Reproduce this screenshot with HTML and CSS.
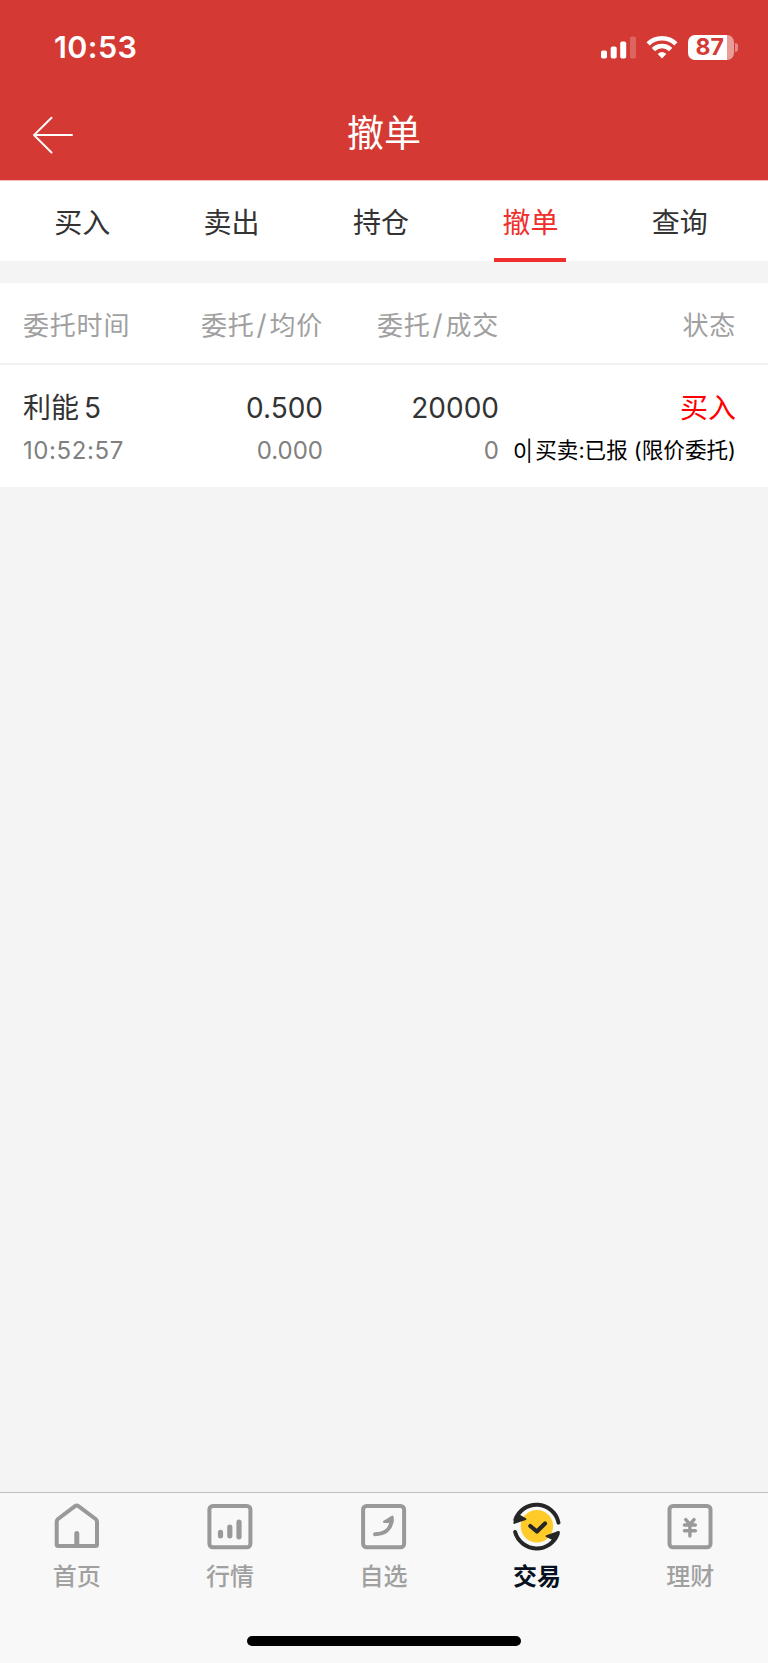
FILE: index.html
```html
<!DOCTYPE html>
<html lang="zh-CN">
<head>
  <meta charset="UTF-8">
  <meta name="viewport" content="width=device-width, initial-scale=1.0">
  <title>撤单</title>
  <link rel="stylesheet" href="styles.css">
</head>
<body>

  <header class="header">
    <div class="status-bar">
      <span class="clock">10:53</span>
      <div class="status-icons">
        <svg class="signal" width="36" height="26" viewBox="0 0 36 26" fill="#fff">
          <rect x="0" y="15.5" width="6" height="8" rx="1.8"/>
          <rect x="9.7" y="11.5" width="6" height="12" rx="1.8"/>
          <rect x="19.2" y="6.5" width="6" height="17" rx="1.8"/>
          <rect x="29" y="1.5" width="6" height="22" rx="1.8" opacity="0.22"/>
        </svg>
        <svg class="wifi" width="32" height="26" viewBox="0 0 32 26">
          <g fill="none" stroke="#fff" stroke-width="4.6">
            <path d="M2.1 8.9A20 20 0 0 1 29.9 8.9"/>
            <path d="M7.4 14.6A12.2 12.2 0 0 1 24.6 14.6"/>
          </g>
          <path d="M11.7 19Q16 15.2 20.3 19L16 23.6z" fill="#fff"/>
        </svg>
        <div class="battery"><span>87</span></div>
        <i class="battery-tip"></i>
      </div>
    </div>
    <div class="title-bar">
      <svg class="back" width="42" height="40" viewBox="0 0 42 40" fill="none" stroke="#fff" stroke-width="2" stroke-linecap="round" stroke-linejoin="round">
        <path d="M19.5 2.7L2 20.1L19.5 37.5M2 20.1H40"/>
      </svg>
      <h1>撤单</h1>
    </div>
  </header>

  <nav class="tabs">
    <a class="tab">买入</a>
    <a class="tab">卖出</a>
    <a class="tab">持仓</a>
    <a class="tab active">撤单</a>
    <a class="tab">查询</a>
  </nav>

  <main class="orders">
    <div class="row thead">
      <div>委托时间</div>
      <div>委托<i class="slash">/</i>均价</div>
      <div>委托<i class="slash">/</i>成交</div>
      <div>状态</div>
    </div>
    <div class="row order">
      <div><p class="main-text name">利能 5</p><p class="sub-text time">10:52:57</p></div>
      <div><p class="main-text">0.500</p><p class="sub-text">0.000</p></div>
      <div><p class="main-text">20000</p><p class="sub-text">0</p></div>
      <div><p class="main-text buy">买入</p><p class="sub-text state"><span class="count">0|</span>买卖:已报 (限价委托)</p></div>
    </div>
  </main>

  <footer class="footer">
    <nav class="menu">
      <a class="menu-item">
        <svg width="50" height="50" viewBox="0 0 50 50" fill="none" stroke="#999" stroke-width="4" stroke-linecap="round" stroke-linejoin="round">
          <path d="M23 5.2Q24.7 4 26.4 5.2L43.6 18Q45 19.2 45 20.5V43.5Q45 45 43.5 45H6.1Q4.7 45 4.7 43.5V20.5Q4.7 19.2 6 18z"/>
          <path d="M24.8 32.5V44" stroke-width="5"/>
        </svg>
        <span>首页</span>
      </a>
      <a class="menu-item">
        <svg width="50" height="50" viewBox="0 0 50 50" fill="none" stroke="#999" stroke-width="4" stroke-linecap="round">
          <rect x="4.4" y="4.9" width="41" height="41.4" rx="3.5"/>
          <path d="M15.5 31.3V34.8M24.8 26V34.8M34 21.2V35.8" stroke-width="5.2"/>
        </svg>
        <span>行情</span>
      </a>
      <a class="menu-item">
        <svg width="50" height="50" viewBox="0 0 50 50" fill="none" stroke="#999" stroke-width="4" stroke-linecap="round" stroke-linejoin="round">
          <rect x="4.1" y="4.9" width="41" height="41.4" rx="3.5"/>
          <path d="M16 33.2C26 33.2 32.5 28 32.7 18"/>
          <path d="M25.2 20.8L33.4 15.8V20.8z" stroke-width="2.4" fill="#999"/>
        </svg>
        <span>自选</span>
      </a>
      <a class="menu-item active">
        <svg width="50" height="50" viewBox="0 0 50 50" fill="none" stroke="#262626" stroke-width="4" stroke-linecap="round" stroke-linejoin="round">
          <circle cx="24.9" cy="25.3" r="16.2" fill="#ffcb29" stroke="none"/>
          <path d="M3.3 19A22.4 22.4 0 0 1 46.5 21.6"/>
          <path d="M45.8 32.5A22.4 22.4 0 0 1 3.1 31"/>
          <path d="M2.3 21.9L5.5 13.5L13.4 18z" stroke-width="2" fill="#262626"/>
          <path d="M46.7 31L34.6 35.2L43 39z" stroke-width="2" fill="#262626"/>
          <path d="M18.3 25L24.9 30.5L33 22.5" stroke-width="4.2"/>
        </svg>
        <span>交易</span>
      </a>
      <a class="menu-item">
        <svg width="50" height="50" viewBox="0 0 50 50" fill="none" stroke="#999" stroke-width="4" stroke-linecap="round" stroke-linejoin="round">
          <rect x="4.5" y="4.9" width="41" height="41.4" rx="3.5"/>
          <path d="M20.8 18.6L24.9 23.4L29 18.6M24.9 24V35M19.4 24H30.4M19.4 29.8H30.4" stroke-width="3.4"/>
        </svg>
        <span>理财</span>
      </a>
    </nav>
    <div class="home-indicator"></div>
  </footer>

</body>
</html>
```

FILE: styles.css
```css
* {
  box-sizing: border-box;
}

body {
  margin: 0;
  min-height: 1663px;
  display: flex;
  flex-direction: column;
  background-color: #f4f4f4;
  color: #333;
  font-family: Inter, "Noto Sans CJK SC", sans-serif;
}

p, h1 {
  margin: 0;
  font-weight: 400;
}

svg {
  display: block;
  flex-shrink: 0;
}

/* header */
.header {
  height: 181px;
  background-color: #d43a33;
  border-bottom: 1px solid #f3bdba;
  color: #fff;
}

.status-bar {
  display: flex;
  justify-content: space-between;
  height: 95px;
  padding: 0 30px 0 54px;
}

.clock {
  font-size: 30.5px;
  font-weight: 600;
  line-height: 93px;
  letter-spacing: 0.4px;
}

.status-icons {
  display: flex;
  align-items: flex-start;
  padding-top: 34.5px;
}

.signal {
  margin-right: 9px;
}

.wifi {
  margin-right: 9.5px;
}

.battery {
  width: 46px;
  height: 25px;
  border-radius: 7px;
  background: linear-gradient(to right, #fff 39.5px, #e99c98 39.5px);
  color: #d43a33;
  font-size: 23px;
  font-weight: 700;
  line-height: 25px;
  padding-left: 8px;
}

.battery-tip {
  width: 3px;
  height: 9px;
  margin: 8px 0 0 1.5px;
  border-radius: 0 4px 4px 0;
  background-color: #e48a86;
}

.title-bar {
  display: flex;
  align-items: center;
  height: 80px;
  padding: 0 32px;
}

.title-bar h1 {
  flex: 1;
  margin-right: 42px;
  text-align: center;
  font-size: 37px;
  line-height: 74px;
  padding-bottom: 2px;
}

/* tabs */
.tabs {
  display: flex;
  height: 80px;
  padding: 0 13.5px 0 7.5px;
  background-color: #fff;
  margin-bottom: 22px;
}

.tab {
  position: relative;
  flex: 1;
  text-align: center;
  font-size: 28px;
  line-height: 85px;
}

.tab.active {
  color: #ef2f2c;
}

.tab.active::after {
  content: "";
  position: absolute;
  left: 50%;
  bottom: -1px;
  width: 72px;
  height: 4px;
  margin-left: -36.5px;
  background-color: #ef2f2c;
}

/* orders */
.orders {
  background-color: #fff;
}

.row {
  display: grid;
  grid-template-columns: 124px 176px 176px 1fr;
  padding: 0 32px 0 23px;
  text-align: right;
  white-space: nowrap;
}

.row > div:first-child {
  text-align: left;
}

.thead {
  height: 82px;
  border-bottom: 2px solid #f2f2f2;
  color: #a0a0a0;
  font-size: 26px;
  line-height: 85px;
  letter-spacing: 0.8px;
}

.slash {
  margin: 0 2px;
  font-size: 28px;
  font-style: normal;
}

.order {
  height: 122px;
  padding-top: 22px;
}

.main-text {
  font-size: 28px;
  line-height: 43px;
}

.main-text.name {
  word-spacing: -3px;
}

.sub-text {
  font-size: 24px;
  line-height: 42px;
  color: #808080;
}

.sub-text.time {
  letter-spacing: 0.6px;
}

.main-text.buy {
  color: #f00;
}

.sub-text.state {
  color: #000;
  font-size: 21.6px;
  line-height: 40px;
}

.count {
  margin-right: 3px;
  font-size: 20.5px;
  letter-spacing: -0.5px;
}

/* bottom menu */
.footer {
  margin-top: auto;
  height: 171px;
  background-color: #f8f8f8;
  border-top: 1px solid #bfbfbf;
}

.menu {
  display: flex;
  height: 143px;
  padding-right: 1px;
}

.menu-item {
  flex: 1;
  display: flex;
  flex-direction: column;
  align-items: center;
  padding-top: 8px;
  color: #a0a0a0;
  font-size: 24px;
  font-weight: 500;
  line-height: 52px;
}

.menu-item.active {
  color: #061020;
  font-weight: 700;
}

.home-indicator {
  width: 274px;
  height: 10px;
  margin: 0 auto;
  border-radius: 5px;
  background-color: #000;
}
```
